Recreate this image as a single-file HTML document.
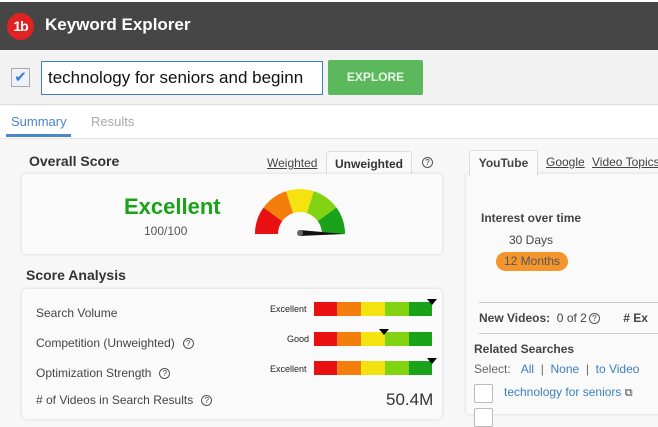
<!DOCTYPE html>
<html><head><style>
*{margin:0;padding:0;box-sizing:border-box}
body{width:658px;height:412px;overflow:hidden;background:#f7f7f7;font-family:"Liberation Sans",Arial,sans-serif;position:relative;color:#333}
.a{position:absolute}
.hdr{left:0;top:2px;width:658px;height:48px;background:#464646}
.bar{position:absolute;height:14px;width:118px;left:314px;display:flex}
.bar i{display:block;height:14px}
.q{display:inline-block;width:11px;height:11px;border:1px solid #555;border-radius:50%;font-size:8px;text-align:center;line-height:10px;font-style:normal;vertical-align:middle;margin-left:8px}
.tri{position:absolute;width:0;height:0;border-left:5px solid transparent;border-right:5px solid transparent;border-top:6px solid #000}
</style></head><body>
<div class="a" style="left:0;top:0;width:658px;height:2px;background:#fff"></div>
<div class="a hdr"></div>
<div class="a" style="left:7px;top:13px;width:27px;height:27px;border-radius:50%;background:#e02222;color:#fff;font-weight:bold;font-size:14px;text-align:center;line-height:27px;letter-spacing:-1px">1b</div>
<div class="a" style="left:45px;top:15px;color:#fff;font-weight:bold;font-size:17px">Keyword Explorer</div>
<div class="a" style="left:0;top:50px;width:658px;height:55px;background:#f2f2f2;border-bottom:1px solid #ddd"></div>
<div class="a" style="left:11px;top:68px;width:19px;height:19px;border:1px solid #aaa;background:#eef2f8;color:#3a7fd5;font-size:15px;text-align:center;line-height:17px">✔</div>
<div class="a" style="left:41px;top:61px;width:282px;height:34px;border:1px solid #3a7fc0;background:#fff;font-size:17px;line-height:32px;padding-left:6px;color:#111;white-space:nowrap;overflow:hidden">technology for seniors and beginn</div>
<div class="a" style="left:328px;top:60px;width:95px;height:35px;background:#5cb85c;border-radius:2px;color:#e8f6e8;font-weight:bold;font-size:12px;text-align:center;line-height:35px">EXPLORE</div>
<div class="a" style="left:0;top:106px;width:658px;height:32px;background:#fff"></div>
<div class="a" style="left:11px;top:114px;color:#4a86c8;font-size:13px">Summary</div>
<div class="a" style="left:6px;top:134px;width:65px;height:3px;background:#4a86c8"></div>
<div class="a" style="left:91px;top:114px;color:#aaa;font-size:13px">Results</div>
<div class="a" style="left:0;top:138px;width:658px;height:1px;background:#e4e4e4"></div>
<!-- left -->
<div class="a" style="left:29px;top:153px;font-weight:bold;font-size:14px;color:#333">Overall Score</div>
<div class="a" style="left:267px;top:156px;font-size:12px;color:#444;text-decoration:underline">Weighted</div>
<div class="a" style="left:326px;top:151px;width:86px;height:25px;border:1px solid #ddd;border-bottom:none;background:#fafafa;font-weight:bold;font-size:12px;text-align:center;line-height:24px;border-radius:3px 3px 0 0">Unweighted</div>
<div class="a" style="left:414px;top:154px"><span class="q">?</span></div>
<div class="a" style="left:22px;top:174px;width:420px;height:80px;background:#fafafa;border-radius:4px;box-shadow:0 0 3px rgba(0,0,0,.15)"></div>
<div class="a" style="left:124px;top:194px;font-weight:bold;font-size:22px;color:#1aa31a">Excellent</div>
<div class="a" style="left:144px;top:224px;font-size:12px;color:#555">100/100</div>
<svg class="a" style="left:250px;top:187px" width="100" height="52" viewBox="0 0 100 52">
<g transform="translate(50,47)">
<path d="M-45 0 A45 45 0 0 1 -36.4 -26.5 L-17.8 -12.9 A22 22 0 0 0 -22 0Z" fill="#e81010"/>
<path d="M-36.4 -26.5 A45 45 0 0 1 -13.9 -42.8 L-6.8 -20.9 A22 22 0 0 0 -17.8 -12.9Z" fill="#f47e0c"/>
<path d="M-13.9 -42.8 A45 45 0 0 1 13.9 -42.8 L6.8 -20.9 A22 22 0 0 0 -6.8 -20.9Z" fill="#f5e211"/>
<path d="M13.9 -42.8 A45 45 0 0 1 36.4 -26.5 L17.8 -12.9 A22 22 0 0 0 6.8 -20.9Z" fill="#82d412"/>
<path d="M36.4 -26.5 A45 45 0 0 1 45 0 L22 0 A22 22 0 0 0 17.8 -12.9Z" fill="#1aa31a"/>
<path d="M-1 -4 L45 0 L-1 2Z" fill="#111"/>
<circle cx="0" cy="-1" r="3" fill="#666"/>
</g></svg>
<div class="a" style="left:26px;top:267px;font-weight:bold;font-size:14px;color:#333">Score Analysis</div>
<div class="a" style="left:22px;top:289px;width:420px;height:130px;background:#fafafa;border-radius:4px;box-shadow:0 0 3px rgba(0,0,0,.15)"></div>
<div class="a" style="left:36px;top:306px;font-size:12px;color:#444">Search Volume</div>
<div class="a" style="left:36px;top:336px;font-size:12px;color:#444">Competition (Unweighted)<span class="q">?</span></div>
<div class="a" style="left:36px;top:366px;font-size:12px;color:#444">Optimization Strength<span class="q">?</span></div>
<div class="a" style="left:36px;top:393px;font-size:12px;color:#444"># of Videos in Search Results<span class="q">?</span></div>
<div class="a" style="left:270px;top:304px;font-size:9px;color:#222">Excellent</div>
<div class="a" style="left:287px;top:334px;font-size:9px;color:#222">Good</div>
<div class="a" style="left:270px;top:364px;font-size:9px;color:#222">Excellent</div>
<div class="bar" style="top:302px"><i style="width:23px;background:#e81010"></i><i style="width:24px;background:#f47e0c"></i><i style="width:24px;background:#f5e211"></i><i style="width:24px;background:#82d412"></i><i style="width:23px;background:#1aa31a"></i></div>
<div class="bar" style="top:332px"><i style="width:23px;background:#e81010"></i><i style="width:24px;background:#f47e0c"></i><i style="width:24px;background:#f5e211"></i><i style="width:24px;background:#82d412"></i><i style="width:23px;background:#1aa31a"></i></div>
<div class="bar" style="top:361px"><i style="width:23px;background:#e81010"></i><i style="width:24px;background:#f47e0c"></i><i style="width:24px;background:#f5e211"></i><i style="width:24px;background:#82d412"></i><i style="width:23px;background:#1aa31a"></i></div>
<div class="tri" style="left:427px;top:299px"></div>
<div class="tri" style="left:379px;top:329px"></div>
<div class="tri" style="left:427px;top:358px"></div>
<div class="a" style="left:386px;top:390px;font-size:17px;color:#333">50.4M</div>
<!-- right -->
<div class="a" style="left:466px;top:174px;width:200px;height:240px;background:#fafafa;box-shadow:0 0 3px rgba(0,0,0,.15)"></div>
<div class="a" style="left:469px;top:150px;width:69px;height:26px;border:1px solid #ddd;border-bottom:none;background:#fafafa;font-weight:bold;font-size:12px;text-align:center;line-height:24px;border-radius:3px 3px 0 0;color:#444">YouTube</div>
<div class="a" style="left:546px;top:155px;font-size:12px;color:#444;text-decoration:underline">Google</div>
<div class="a" style="left:592px;top:155px;font-size:12px;color:#444;text-decoration:underline;white-space:nowrap">Video Topics</div>
<div class="a" style="left:481px;top:211px;font-size:12px;font-weight:bold;color:#444">Interest over time</div>
<div class="a" style="left:509px;top:233px;font-size:12px;color:#444">30 Days</div>
<div class="a" style="left:496px;top:252px;width:72px;height:19px;border-radius:10px;background:#f4952e;font-size:12px;color:#555;text-align:center;line-height:19px">12 Months</div>
<div class="a" style="left:479px;top:302px;width:179px;height:1px;background:#ccc"></div>
<div class="a" style="left:479px;top:311px;font-size:12px;color:#444;white-space:nowrap"><b>New Videos:</b>&nbsp; 0 of 2<span class="q" style="margin-left:2px">?</span> <b style="margin-left:20px"># Ex</b></div>
<div class="a" style="left:479px;top:333px;width:179px;height:1px;background:#ccc"></div>
<div class="a" style="left:474px;top:342px;font-size:12px;font-weight:bold;color:#444">Related Searches</div>
<div class="a" style="left:474px;top:362px;font-size:12px;color:#666;white-space:nowrap">Select: &nbsp;&nbsp;<span style="color:#3a7fc0">All</span> &nbsp;| &nbsp;<span style="color:#3a7fc0">None</span> &nbsp;| &nbsp;<span style="color:#3a7fc0">to Video</span></div>
<div class="a" style="left:474px;top:384px;width:19px;height:19px;border:1px solid #bbb;border-radius:2px;background:#fff"></div>
<div class="a" style="left:474px;top:408px;width:19px;height:19px;border:1px solid #bbb;border-radius:2px;background:#fff"></div>
<div class="a" style="left:504px;top:385px;font-size:12px;color:#3a7fc0;white-space:nowrap">technology for seniors <span style="color:#444;font-size:11px">⧉</span></div>
</body></html>
